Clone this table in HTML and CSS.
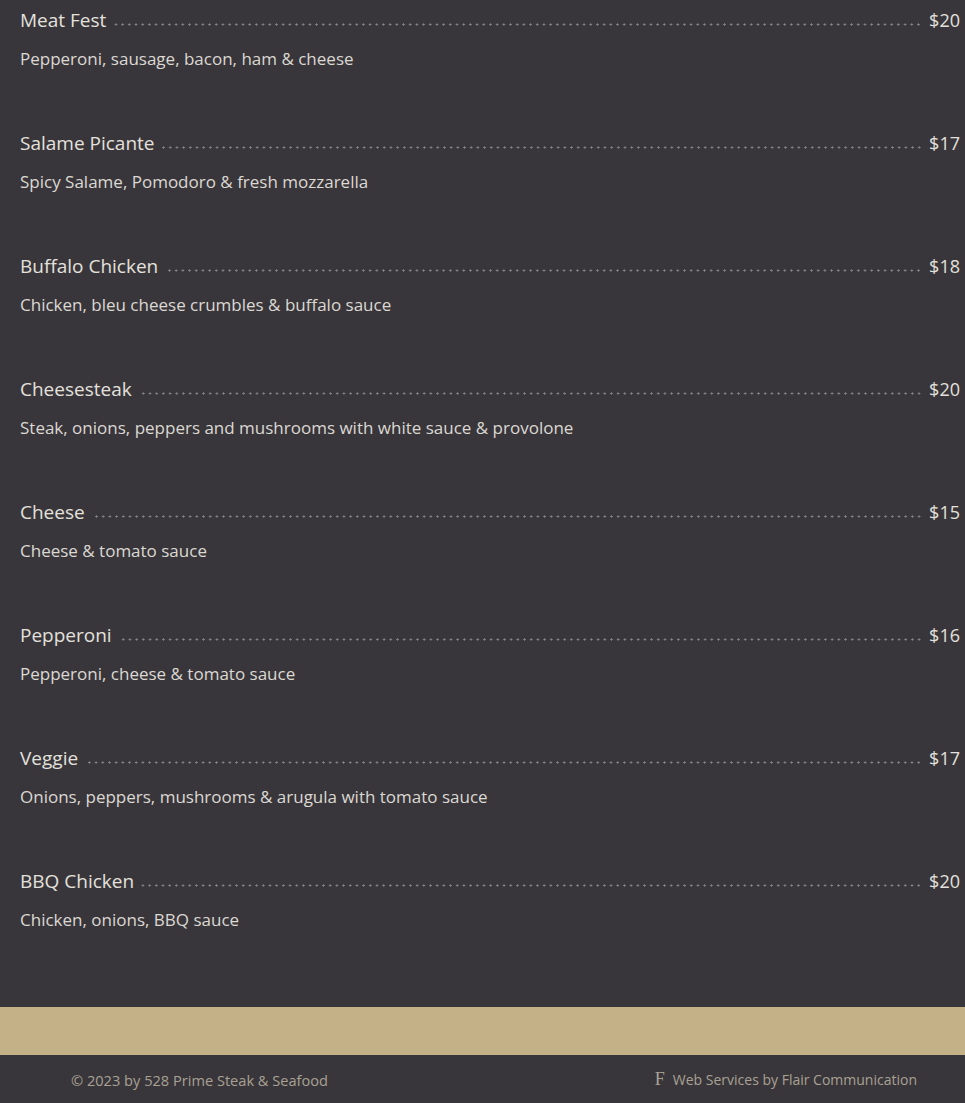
FILE: index.html
```html
<!DOCTYPE html>
<html>
  <head>
    <title>Pizza Menu</title>
    <link rel="stylesheet" href="styles.css">
  </head>
  <body>
    <div class="menu">
      <div class="item">
        <div class="item-head">
          <span class="name">Meat Fest</span>
          <span class="dots"></span>
          <span class="price">$20</span>
        </div>
        <p class="desc">Pepperoni, sausage, bacon, ham &amp; cheese</p>
      </div>
      <div class="item">
        <div class="item-head">
          <span class="name">Salame Picante</span>
          <span class="dots"></span>
          <span class="price">$17</span>
        </div>
        <p class="desc">Spicy Salame, Pomodoro &amp; fresh mozzarella</p>
      </div>
      <div class="item">
        <div class="item-head">
          <span class="name">Buffalo Chicken</span>
          <span class="dots"></span>
          <span class="price">$18</span>
        </div>
        <p class="desc">Chicken, bleu cheese crumbles &amp; buffalo sauce</p>
      </div>
      <div class="item">
        <div class="item-head">
          <span class="name">Cheesesteak</span>
          <span class="dots"></span>
          <span class="price">$20</span>
        </div>
        <p class="desc">Steak, onions, peppers and mushrooms with white sauce &amp; provolone</p>
      </div>
      <div class="item">
        <div class="item-head">
          <span class="name">Cheese</span>
          <span class="dots"></span>
          <span class="price">$15</span>
        </div>
        <p class="desc">Cheese &amp; tomato sauce</p>
      </div>
      <div class="item">
        <div class="item-head">
          <span class="name">Pepperoni</span>
          <span class="dots"></span>
          <span class="price">$16</span>
        </div>
        <p class="desc">Pepperoni, cheese &amp; tomato sauce</p>
      </div>
      <div class="item">
        <div class="item-head">
          <span class="name">Veggie</span>
          <span class="dots"></span>
          <span class="price">$17</span>
        </div>
        <p class="desc">Onions, peppers, mushrooms &amp; arugula with tomato sauce</p>
      </div>
      <div class="item">
        <div class="item-head">
          <span class="name">BBQ Chicken</span>
          <span class="dots"></span>
          <span class="price">$20</span>
        </div>
        <p class="desc">Chicken, onions, BBQ sauce</p>
      </div>
    </div>

    <div class="band"></div>

    <footer>
      <span class="copy">&copy; 2023 by 528 Prime Steak &amp; Seafood</span>
      <span class="credit"><span class="logo">F</span>Web Services by Flair Communication</span>
    </footer>
  </body>
</html>
```

FILE: styles.css
```css
html {
  background-color: #000;
}
body {
  margin: 0;
  background-color: #38363b;
  font-family: "Open Sans", "Lato", sans-serif;
  color: #e4e1dc;
}
.menu {
  padding: 6px 5px 17px 20px;
}
.item {
  height: 123px;
}
.item-head {
  display: flex;
  align-items: baseline;
  font-size: 19px;
  line-height: 28px;
}
.dots {
  flex: 1;
  height: 6px;
  margin: 0 7px 0 7px;
  background-image: radial-gradient(circle, #8a8790 0.9px, transparent 1.2px);
  background-size: 6.7px 3px;
  background-repeat: repeat-x;
  background-position: right 0 bottom 1px;
}
.price {
  font-size: 18px;
}
.desc {
  margin: 13px 0 0;
  font-size: 17px;
  line-height: 24px;
  color: #dcd8d2;
}
.band {
  height: 48px;
  background-color: #c4b188;
}
footer {
  display: flex;
  justify-content: space-between;
  align-items: center;
  height: 40px;
  box-sizing: border-box;
  padding: 9px 48px 0 71px;
  margin-bottom: 8px;
  font-size: 14.6px;
  color: #a9a193;
}
.credit {
  font-size: 14px;
}
.logo {
  font-family: "Liberation Serif", serif;
  font-size: 18px;
  margin-right: 8px;
}
```
